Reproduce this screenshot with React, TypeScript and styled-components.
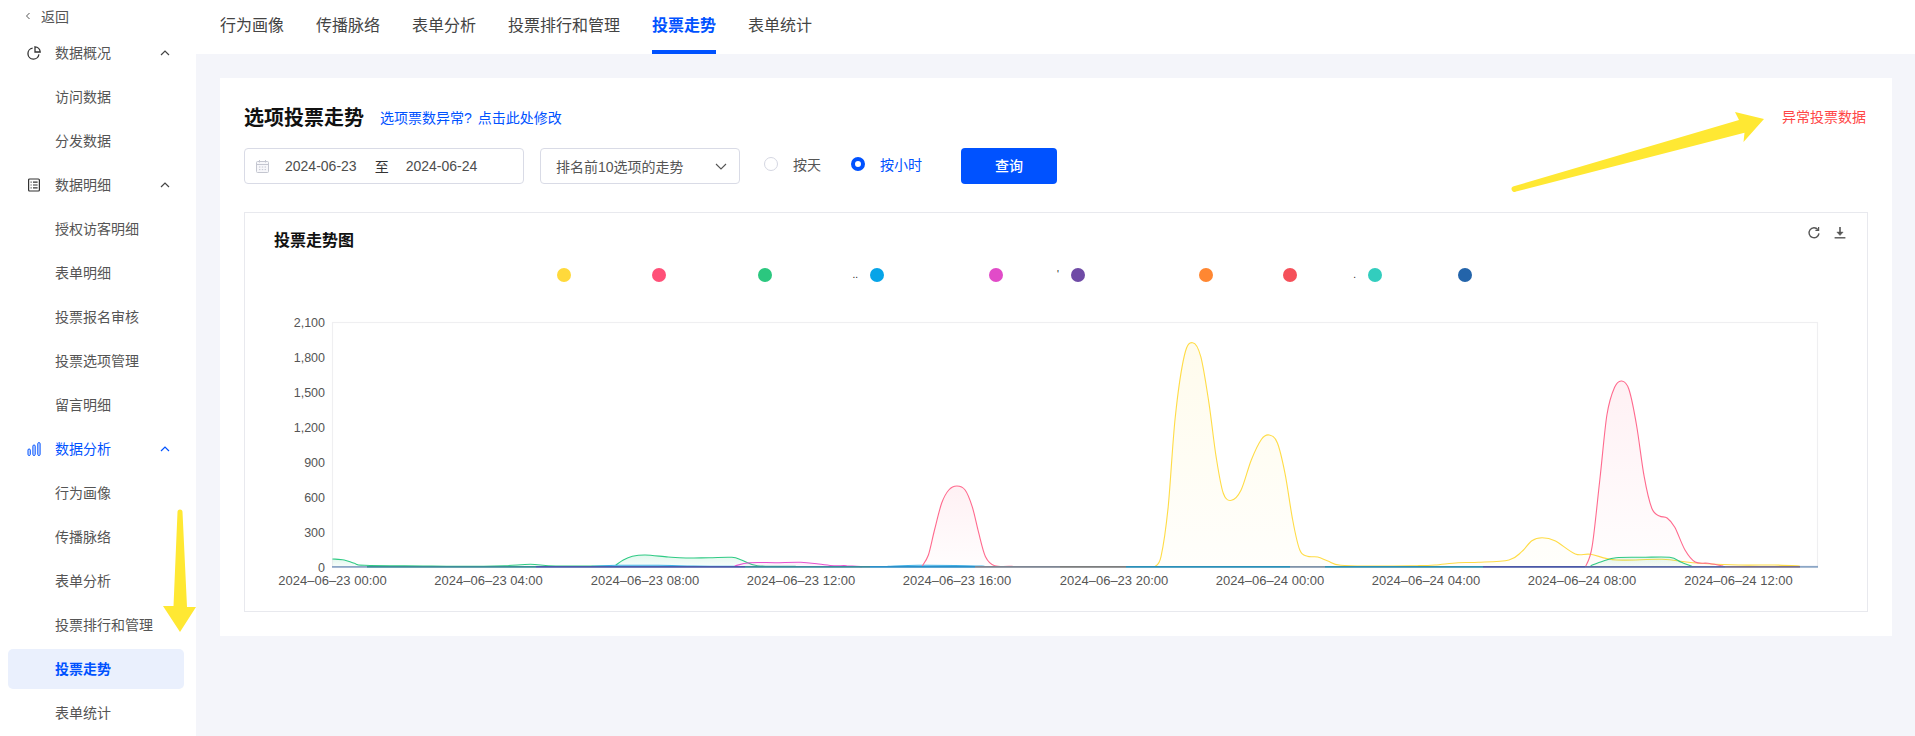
import React from "react";
import styled, { createGlobalStyle } from "styled-components";

const Global = createGlobalStyle`
  html, body { margin: 0; padding: 0; height: 100%; background: #f4f5fa; }
  body { font-family: "Liberation Sans", "Noto Sans CJK SC", sans-serif; overflow: hidden; }
  * { box-sizing: border-box; }
`;

const BLUE = "#0052ff";

const Page = styled.div`
  position: relative;
  display: grid;
  grid-template-columns: 196px 1fr;
  height: 736px;
  overflow: hidden;
`;

const Sidebar = styled.nav`
  display: flex;
  flex-direction: column;
  background: #fff;
  color: #555;
  font-size: 14px;
`;

const BackRow = styled.div`
  display: flex;
  align-items: center;
  height: 31px;
  padding-left: 25px;
  gap: 10px;
  font-size: 14px;
  color: #555;
`;

const GroupRow = styled.div<{ $active?: boolean }>`
  display: flex;
  align-items: center;
  flex: none;
  height: 44px;
  padding-left: 27px;
  color: ${(p) => (p.$active ? BLUE : "#555")};
`;

const GroupLabel = styled.span`
  margin-left: 14px;
  width: 105px;
  padding-bottom: 2px;
`;

const SubRow = styled.div<{ $active?: boolean }>`
  display: flex;
  align-items: center;
  flex: none;
  height: 40px;
  margin: 2px 12px 2px 8px;
  padding: 0 0 2px 47px;
  border-radius: 5px;
  background: ${(p) => (p.$active ? "#eaf0fd" : "transparent")};
  color: ${(p) => (p.$active ? BLUE : "#555")};
  font-weight: ${(p) => (p.$active ? 700 : 400)};
`;

const Main = styled.main`
  display: flex;
  flex-direction: column;
  min-width: 0;
`;

const TopBar = styled.div`
  display: flex;
  flex: none;
  height: 54px;
  padding-left: 24px;
  gap: 32px;
  background: #fff;
`;

const Tab = styled.div<{ $active?: boolean }>`
  display: flex;
  align-items: center;
  height: 54px;
  padding-bottom: 2px;
  font-size: 16px;
  color: ${(p) => (p.$active ? BLUE : "#444")};
  font-weight: ${(p) => (p.$active ? 700 : 400)};
  border-bottom: 4px solid ${(p) => (p.$active ? BLUE : "transparent")};
`;

const Card = styled.section`
  margin: 24px 23px 0 24px;
  padding: 24px 24px 24px;
  background: #fff;
`;

const TitleRow = styled.div`
  display: flex;
  align-items: center;
  height: 28px;
  padding-right: 2px;
`;

const Title = styled.h1`
  margin: 0;
  padding-top: 4px;
  font-size: 20px;
  line-height: 28px;
  font-weight: 700;
  color: #111;
`;

const FixLink = styled.a`
  margin-left: 16px;
  padding-top: 2px;
  font-size: 14px;
  word-spacing: 2px;
  color: ${BLUE};
`;

const AbnormalLink = styled.a`
  margin-left: auto;
  font-size: 14px;
  color: #ff4646;
`;

const Toolbar = styled.div`
  display: flex;
  align-items: center;
  height: 36px;
  margin-top: 18px;
`;

const DateField = styled.div`
  display: flex;
  align-items: center;
  width: 280px;
  height: 36px;
  padding-left: 11px;
  border: 1px solid #d9dbe6;
  border-radius: 4px;
  font-size: 14px;
  color: #4d4d4d;
`;

const DateValue = styled.span<{ $first?: boolean }>`
  margin-left: ${(p) => (p.$first ? "16px" : "17px")};
`;

const DateSep = styled.span`
  margin-left: 18px;
  color: #333;
`;

const SelectField = styled.div`
  display: flex;
  align-items: center;
  justify-content: space-between;
  width: 200px;
  height: 36px;
  margin-left: 16px;
  padding: 0 12px 0 15px;
  border: 1px solid #d9dbe6;
  border-radius: 4px;
  font-size: 14px;
  color: #555;
`;

const RadioItem = styled.label<{ $on?: boolean; $gap: number }>`
  display: flex;
  align-items: center;
  gap: 15px;
  margin-left: ${(p) => p.$gap}px;
  height: 36px;
  padding-bottom: 5px;
  font-size: 14px;
  color: ${(p) => (p.$on ? BLUE : "#555")};
`;

const RadioDot = styled.span<{ $on?: boolean }>`
  display: block;
  width: 14px;
  height: 14px;
  border-radius: 50%;
  background: #fff;
  border: ${(p) => (p.$on ? `4.5px solid ${BLUE}` : "1px solid #d5d7e2")};
`;

const QueryButton = styled.button`
  width: 96px;
  height: 36px;
  margin-left: 39px;
  padding: 0 0 2px;
  border: 0;
  border-radius: 4px;
  background: ${BLUE};
  color: #fff;
  font: 500 14px "Liberation Sans", "Noto Sans CJK SC", sans-serif;
`;

const ChartBox = styled.div`
  margin-top: 28px;
  height: 400px;
  border: 1px solid #e8e9ee;
`;

const ChartHeader = styled.div`
  display: flex;
  justify-content: space-between;
  align-items: flex-start;
  height: 38px;
  padding: 14px 20px 0 29px;
`;

const ChartTitle = styled.h2`
  margin: 0;
  padding-top: 2px;
  font-size: 16px;
  line-height: 24px;
  font-weight: 700;
  color: #111;
`;

const ChartTools = styled.div`
  display: flex;
  gap: 12px;
  margin-top: -1px;
`;

const Legend = styled.div`
  display: flex;
  height: 14px;
  margin-top: 17px;
  padding-left: 312px;
`;

const LegendItem = styled.div<{ $width: number }>`
  display: flex;
  align-items: center;
  flex: none;
  width: ${(p) => p.$width}px;
`;

const LegendDot = styled.span<{ $color: string }>`
  display: block;
  flex: none;
  width: 14px;
  height: 14px;
  border-radius: 50%;
  background: ${(p) => p.$color};
`;

const LegendScrap = styled.span`
  margin-left: auto;
  margin-right: 12px;
  font-size: 10px;
  line-height: 14px;
  color: #222;
`;

const ChartSvg = styled.svg`
  display: block;
  margin-top: 18px;
  font-family: "Liberation Sans", "Noto Sans CJK SC", sans-serif;
`;

const Overlay = styled.svg`
  position: absolute;
  left: 0;
  top: 0;
  pointer-events: none;
`;

type Pt = [number, number];

const left = (pts: Pt[]): Pt[] => pts.map(([x, y]) => [260 + x / 1.96, 300 + y / 3]);
const right = (pts: Pt[]): Pt[] => pts.map(([x, y]) => [1060 + x / 1.96, 300 + y / 3]);

const smooth = (pts: Pt[]) => {
  let d = `M${pts[0][0].toFixed(1)} ${pts[0][1].toFixed(1)}`;
  for (let i = 0; i < pts.length - 1; i++) {
    const p0 = pts[Math.max(i - 1, 0)];
    const p1 = pts[i];
    const p2 = pts[i + 1];
    const p3 = pts[Math.min(i + 2, pts.length - 1)];
    const c1x = p1[0] + (p2[0] - p0[0]) / 6;
    const c1y = p1[1] + (p2[1] - p0[1]) / 6;
    const c2x = p2[0] - (p3[0] - p1[0]) / 6;
    const c2y = p2[1] - (p3[1] - p1[1]) / 6;
    d += `C${c1x.toFixed(1)} ${c1y.toFixed(1)} ${c2x.toFixed(1)} ${c2y.toFixed(1)} ${p2[0].toFixed(1)} ${p2[1].toFixed(1)}`;
  }
  return d;
};

const YELLOW = "#ffdc46";
const PINK = "#ff6a8e";
const GREEN = "#2fca84";
const MAGENTA = "#e653cf";
const SKY = "#3fb0e6";

const series: { color: string; fill: string; pts: Pt[] }[] = [
  {
    color: GREEN, fill: "fGreen",
    pts: left([[142, 777], [165, 780], [185, 790], [205, 796], [320, 798], [400, 799], [480, 797], [530, 793], [580, 798], [690, 798]]),
  },
  {
    color: GREEN, fill: "fGreen",
    pts: left([[697, 796], [712, 780], [730, 769], [755, 765], [800, 771], [835, 774], [880, 773], [925, 772], [945, 781], [975, 797], [1050, 799]]),
  },
  {
    color: SKY, fill: "fSky",
    pts: left([[650, 799], [700, 796], [780, 796], [850, 798], [930, 799]]),
  },
  {
    color: SKY, fill: "fSky",
    pts: left([[1230, 799], [1290, 796], [1385, 797], [1420, 799]]),
  },
  {
    color: MAGENTA, fill: "fMagenta",
    pts: left([[930, 798], [960, 788], [1010, 788], [1060, 787], [1095, 792], [1125, 797], [1150, 797], [1180, 800]]),
  },
  {
    color: PINK, fill: "fPink",
    pts: left([[1298, 798], [1310, 765], [1322, 690], [1336, 610], [1350, 570], [1366, 558], [1382, 570], [1396, 620], [1408, 695], [1422, 770], [1440, 797], [1475, 799]]),
  },
  {
    color: YELLOW, fill: "fYellow",
    pts: right([[186, 800], [198, 770], [212, 620], [226, 350], [244, 165], [260, 128], [276, 170], [292, 310], [306, 470], [320, 580], [336, 601], [355, 570], [375, 480], [395, 418], [410, 405], [426, 428], [441, 520], [456, 660], [470, 750], [485, 769], [505, 771], [525, 783], [550, 796], [620, 798], [700, 797], [735, 795], [780, 788], [820, 787], [880, 780], [905, 755], [925, 722], [945, 713], [970, 722], [1010, 762], [1040, 763], [1090, 780], [1180, 778], [1240, 788], [1330, 795], [1400, 795], [1450, 798]]),
  },
  {
    color: GREEN, fill: "fGreen",
    pts: right([[1040, 797], [1065, 783], [1090, 773], [1140, 772], [1195, 772], [1218, 787], [1240, 800]]),
  },
  {
    color: PINK, fill: "fPink",
    pts: right([[1030, 800], [1043, 740], [1058, 540], [1072, 345], [1087, 262], [1101, 243], [1115, 268], [1130, 375], [1145, 530], [1160, 625], [1175, 648], [1190, 654], [1205, 682], [1225, 750], [1245, 786], [1270, 790], [1300, 798]]),
  },
];

const baseSegments: { from: number; to: number; color: string }[] = [
  { from: 332, to: 367, color: "#8ba6c6" },
  { from: 367, to: 536, color: "#3d8d98" },
  { from: 536, to: 745, color: "#4a5cab" },
  { from: 745, to: 870, color: "#3c8b9c" },
  { from: 870, to: 975, color: "#2b8fc8" },
  { from: 975, to: 1060, color: "#7d8592" },
  { from: 1060, to: 1126, color: "#7b7d7e" },
  { from: 1126, to: 1290, color: "#2a8fb8" },
  { from: 1290, to: 1325, color: "#7f93a8" },
  { from: 1325, to: 1483, color: "#2f8fb0" },
  { from: 1483, to: 1585, color: "#4a57a6" },
  { from: 1585, to: 1725, color: "#5a6aa5" },
  { from: 1725, to: 1800, color: "#77708f" },
  { from: 1800, to: 1818, color: "#8ba6c6" },
];

const yTicks: [string, number][] = [
  ["2,100", 322], ["1,800", 357], ["1,500", 392], ["1,200", 427], ["900", 462], ["600", 497], ["300", 532], ["0", 567],
];

const xTicks: [string, number][] = [
  ["2024–06–23 00:00", 332.5],
  ["2024–06–23 04:00", 488.6],
  ["2024–06–23 08:00", 645],
  ["2024–06–23 12:00", 801],
  ["2024–06–23 16:00", 957],
  ["2024–06–23 20:00", 1114],
  ["2024–06–24 00:00", 1270],
  ["2024–06–24 04:00", 1426],
  ["2024–06–24 08:00", 1582],
  ["2024–06–24 12:00", 1738.5],
];

const legend: { color: string; width: number; scrap?: string }[] = [
  { color: "#ffd93b", width: 95 },
  { color: "#ff5078", width: 106 },
  { color: "#2bc77f", width: 112, scrap: ".." },
  { color: "#06a4e8", width: 119 },
  { color: "#e14bc8", width: 82, scrap: "'" },
  { color: "#6f4ba6", width: 128 },
  { color: "#ff8732", width: 84 },
  { color: "#f5505a", width: 85, scrap: "." },
  { color: "#32cdbe", width: 90 },
  { color: "#2364aa", width: 14 },
];

const PieIcon = () => (
  <svg width="14" height="14" viewBox="0 0 14 14" fill="none" stroke="#333" strokeWidth="1.3">
    <path d="M5.6 2.2A5.5 5.5 0 1 0 11.9 8.4" />
    <path d="M8 .8A5.5 5.5 0 0 1 13.2 6H8Z" />
  </svg>
);

const ListIcon = () => (
  <svg width="14" height="14" viewBox="0 0 14 14" fill="none" stroke="#333" strokeWidth="1.2">
    <rect x="1.6" y="1" width="10.8" height="12" rx="1" />
    <path d="M3.6 4.2h1M6 4.2h4.6M3.6 7h1M6 7h4.6M3.6 9.8h1M6 9.8h4.6" />
  </svg>
);

const BarsIcon = () => (
  <svg width="14" height="14" viewBox="0 0 14 14" fill="#dfe8fd" stroke={BLUE} strokeWidth="1">
    <rect x="1" y="7" width="2.3" height="6.5" rx="1.1" />
    <rect x="5.9" y="3" width="2.3" height="10.5" rx="1.1" />
    <rect x="10.8" y=".6" width="2.3" height="12.9" rx="1.1" />
  </svg>
);

const Chevron = ({ color = "#444" }: { color?: string }) => (
  <svg width="10" height="6" viewBox="0 0 10 6" fill="none" stroke={color} strokeWidth="1.2">
    <path d="M1 5l4-4 4 4" />
  </svg>
);

const BackChevron = () => (
  <svg width="6" height="8" viewBox="0 0 6 8" fill="none" stroke="#555" strokeWidth="1">
    <path d="M4.5 1L1.500 4l3 3" />
  </svg>
);

const CalendarIcon = () => (
  <svg width="13" height="13" viewBox="0 0 13 13" fill="none" stroke="#c4c6d0" strokeWidth="1">
    <rect x=".5" y="1.5" width="12" height="11" rx="1" fill="#f7f7fa" />
    <path d="M.5 4.500h12M3.500 0v2.500M9.500 0v2.500" />
    <path d="M3 7h1.400M5.800 7h1.400M8.600 7H10M3 9.600h1.400M5.800 9.600h1.400M8.600 9.600H10" />
  </svg>
);

const DownChevron = () => (
  <svg width="12" height="7" viewBox="0 0 12 7" fill="none" stroke="#555" strokeWidth="1.1">
    <path d="M1 1l5 5 5-5" />
  </svg>
);

const RefreshIcon = () => (
  <svg width="14" height="14" viewBox="0 0 14 14" fill="none" stroke="#555" strokeWidth="1.4">
    <path d="M10.9 3.600A5 5 0 1 0 12 7.400" />
    <path d="M11.600 1v3.300H8.400" strokeWidth="1.2" />
  </svg>
);

const DownloadIcon = () => (
  <svg width="14" height="14" viewBox="0 0 14 14" fill="#555" stroke="#555">
    <path d="M7 1v5.500" strokeWidth="1.6" />
    <path d="M3.800 6h6.400L7 9.600Z" strokeWidth=".4" />
    <path d="M1.600 11.800h10.800" strokeWidth="1.4" />
  </svg>
);

const groups = [
  { label: "数据概况", icon: <PieIcon />, items: ["访问数据", "分发数据"] },
  { label: "数据明细", icon: <ListIcon />, items: ["授权访客明细", "表单明细", "投票报名审核", "投票选项管理", "留言明细"] },
  { label: "数据分析", icon: <BarsIcon />, active: true, items: ["行为画像", "传播脉络", "表单分析", "投票排行和管理", "投票走势", "表单统计"] },
];

const tabs = ["行为画像", "传播脉络", "表单分析", "投票排行和管理", "投票走势", "表单统计"];

export default function App() {
  return (
    <>
      <Global />
      <Page>
        <Sidebar>
          <BackRow>
            <BackChevron />
            <span>返回</span>
          </BackRow>
          {groups.map((g) => (
            <React.Fragment key={g.label}>
              <GroupRow $active={g.active}>
                {g.icon}
                <GroupLabel>{g.label}</GroupLabel>
                <Chevron color={g.active ? BLUE : "#444"} />
              </GroupRow>
              {g.items.map((item) => (
                <SubRow key={item} $active={item === "投票走势"}>
                  {item}
                </SubRow>
              ))}
            </React.Fragment>
          ))}
        </Sidebar>
        <Main>
          <TopBar>
            {tabs.map((t) => (
              <Tab key={t} $active={t === "投票走势"}>
                {t}
              </Tab>
            ))}
          </TopBar>
          <Card>
            <TitleRow>
              <Title>选项投票走势</Title>
              <FixLink>选项票数异常? 点击此处修改</FixLink>
              <AbnormalLink>异常投票数据</AbnormalLink>
            </TitleRow>
            <Toolbar>
              <DateField>
                <CalendarIcon />
                <DateValue $first>2024-06-23</DateValue>
                <DateSep>至</DateSep>
                <DateValue>2024-06-24</DateValue>
              </DateField>
              <SelectField>
                <span>排名前10选项的走势</span>
                <DownChevron />
              </SelectField>
              <RadioItem $gap={24}>
                <RadioDot />
                按天
              </RadioItem>
              <RadioItem $gap={30} $on>
                <RadioDot $on />
                按小时
              </RadioItem>
              <QueryButton>查询</QueryButton>
            </Toolbar>
            <ChartBox>
              <ChartHeader>
                <ChartTitle>投票走势图</ChartTitle>
                <ChartTools>
                  <RefreshIcon />
                  <DownloadIcon />
                </ChartTools>
              </ChartHeader>
              <Legend>
                {legend.map((l) => (
                  <LegendItem key={l.color} $width={l.width}>
                    <LegendDot $color={l.color} />
                    {l.scrap && <LegendScrap>{l.scrap}</LegendScrap>}
                  </LegendItem>
                ))}
              </Legend>
              <ChartSvg width="1622" height="310" viewBox="245 300 1622 310">
                <defs>
                  <linearGradient id="fYellow" x1="0" y1="0" x2="0" y2="1">
                    <stop offset="0" stopColor="#ffdc46" stopOpacity=".1" />
                    <stop offset="1" stopColor="#ffdc46" stopOpacity=".02" />
                  </linearGradient>
                  <linearGradient id="fPink" x1="0" y1="0" x2="0" y2="1">
                    <stop offset="0" stopColor="#ff5f85" stopOpacity=".09" />
                    <stop offset="1" stopColor="#ff5f85" stopOpacity=".01" />
                  </linearGradient>
                  <linearGradient id="fGreen" x1="0" y1="0" x2="0" y2="1">
                    <stop offset="0" stopColor="#2fca84" stopOpacity=".14" />
                    <stop offset="1" stopColor="#2fca84" stopOpacity=".03" />
                  </linearGradient>
                  <linearGradient id="fMagenta" x1="0" y1="0" x2="0" y2="1">
                    <stop offset="0" stopColor="#e653cf" stopOpacity=".12" />
                    <stop offset="1" stopColor="#e653cf" stopOpacity=".03" />
                  </linearGradient>
                  <linearGradient id="fSky" x1="0" y1="0" x2="0" y2="1">
                    <stop offset="0" stopColor="#3fb0e6" stopOpacity=".2" />
                    <stop offset="1" stopColor="#3fb0e6" stopOpacity=".05" />
                  </linearGradient>
                </defs>
                <rect x="332.5" y="322.5" width="1485" height="245" fill="none" stroke="#efeff1" strokeWidth="1.2" />
                {yTicks.map(([label, y]) => (
                  <text key={label} x="325" y={y + 4.5} textAnchor="end" fontSize="12.5" fill="#555">
                    {label}
                  </text>
                ))}
                {xTicks.map(([label, x]) => (
                  <text key={label} x={x} y="585" textAnchor="middle" fontSize="13" fill="#555">
                    {label}
                  </text>
                ))}
                {series.map((s, i) => {
                  const d = smooth(s.pts);
                  const first = s.pts[0];
                  const last = s.pts[s.pts.length - 1];
                  return (
                    <g key={i}>
                      <path d={`${d}L${last[0]} 567L${first[0]} 567Z`} fill={`url(#${s.fill})`} />
                      <path d={d} fill="none" stroke={s.color} strokeWidth="1.1" />
                    </g>
                  );
                })}
                {baseSegments.map((b) => (
                  <line key={b.from} x1={b.from} x2={b.to} y1="566.8" y2="566.8" stroke={b.color} strokeWidth="1.8" />
                ))}
              </ChartSvg>
            </ChartBox>
          </Card>
        </Main>
        <Overlay width="1915" height="736" viewBox="0 0 1915 736">
          <path d="M177.500 512a2.500 2.500 0 0 1 5 0L187 607h9l-16 25-17-26h10.500Z" fill="#ffe833" />
          <path d="M1513 186.500L1739 120l-4-8 29 7-20.500 23 1-9.300L1516 191.500a2.600 2.600 0 0 1-3-5Z" fill="#ffe833" />
        </Overlay>
      </Page>
    </>
  );
}
